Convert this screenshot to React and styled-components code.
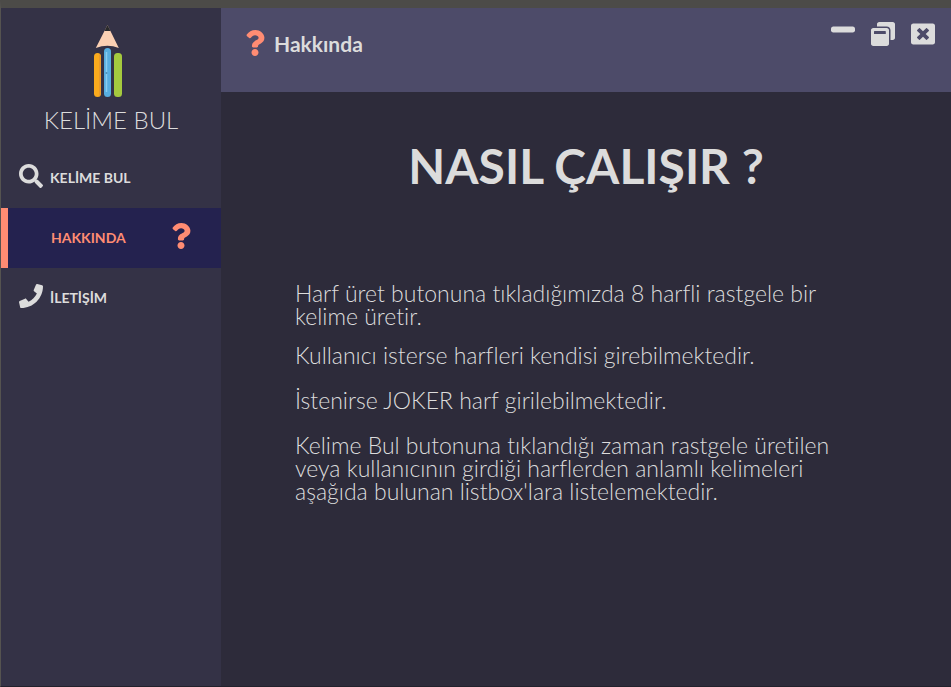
import React from "react";
import styled, { createGlobalStyle } from "styled-components";
import {
  FaPhone,
  FaQuestion,
  FaSearch,
  FaWindowClose,
  FaWindowMinimize,
  FaWindowRestore,
} from "react-icons/fa";

const GlobalStyle = createGlobalStyle`
  * { box-sizing: border-box; }
  body {
    margin: 0;
    background: #2d2b3a;
    color: #dcdcdc;
    font-family: "Century Gothic", Lato, sans-serif;
    font-variant-ligatures: none;
  }
`;

const Window = styled.div`
  display: grid;
  grid-template-columns: 220px 1fr;
  min-height: 100vh;
  border-top: 8px solid #4c4b48;
  border-left: 1px solid #555350;
  border-bottom: 1px solid #22212c;
`;

const Sidebar = styled.aside`
  background: #343246;
`;

const Brand = styled.div`
  display: flex;
  flex-direction: column;
  align-items: center;
  height: 140px;
  padding-top: 17px;

  svg {
    margin-right: 7px;
  }
`;

const BrandName = styled.span`
  margin-top: 8px;
  font-size: 24px;
  font-weight: 300;
  line-height: 28px;
  white-space: nowrap;
`;

const NavButton = styled.button`
  display: flex;
  align-items: center;
  gap: 7px;
  width: 100%;
  height: 60px;
  padding: 0 27px 0 18px;
  border: 0;
  background: transparent;
  color: inherit;
  font: 700 14px/20px "Century Gothic", Lato, sans-serif;
  cursor: pointer;

  svg {
    flex: none;
    width: 24px;
    height: 24px;
    margin-bottom: 4px;
  }
`;

const ActiveNavButton = styled(NavButton)`
  justify-content: space-between;
  padding-left: 43px;
  border-left: 7px solid #ff8c73;
  background: #24224f;
  color: #ff8c73;

  svg {
    width: 26px;
    height: 26px;
  }
`;

const Main = styled.main`
  min-width: 0;
`;

const TitleBar = styled.header`
  display: flex;
  justify-content: space-between;
  align-items: flex-start;
  height: 84px;
  padding: 0 16px 0 21px;
  background: #4d4b69;
`;

const PageName = styled.div`
  display: flex;
  align-items: center;
  gap: 6px;
  height: 70px;
  font-size: 21px;
  font-weight: 700;

  svg {
    width: 26px;
    height: 26px;
    color: #ff8c73;
  }
`;

const WindowControls = styled.div`
  display: flex;
  align-items: flex-end;
  gap: 16px;
  padding-top: 2px;
`;

const ControlButton = styled.button`
  display: flex;
  padding: ${(p) => (p.$raised ? "0 0 12px" : "0")};
  border: 0;
  background: transparent;
  color: inherit;
  cursor: pointer;

  svg {
    width: 24px;
    height: 24px;
  }
`;

const Heading = styled.h1`
  margin: 44px 0 0;
  font-size: 48px;
  font-weight: 700;
  line-height: 60px;
  text-align: center;
`;

const Guide = styled.section`
  max-width: 624px;
  padding: 86px 0 0 74px;
  font-size: 23px;
  font-weight: 300;
  line-height: 23px;
`;

const Step = styled.p`
  margin: 0 0 22px;

  &:first-child {
    margin-bottom: 16px;
  }
`;

function PencilLogo() {
  return (
    <svg width="30" height="73" viewBox="0 0 30 73" aria-hidden="true">
      <path d="M14.5 0 L2.8 23 Q14.5 18.5 25.8 23 Z" fill="#fbd0b3" />
      <path d="M14.5 0 L11.4 6 H17.6 Z" fill="#292a2c" />
      <rect x="1" y="28" width="7" height="44" rx="3.5" fill="#fbab1d" />
      <path d="M6 29 Q8 30 8 33 V67 Q8 70 6 71 Z" fill="#e99a2b" />
      <rect x="11" y="23" width="7" height="49" rx="3.5" fill="#57aee0" />
      <path d="M13.5 27 V67" stroke="#8acbef" strokeWidth="1.5" />
      <circle cx="13.5" cy="48" r="1" fill="#4c8fb7" />
      <rect x="21" y="28" width="8" height="44" rx="3.5" fill="#a5ca3e" />
    </svg>
  );
}

export default function App() {
  return (
    <>
      <GlobalStyle />
      <Window lang="tr">
        <Sidebar>
          <Brand>
            <PencilLogo />
            <BrandName>KELİME BUL</BrandName>
          </Brand>
          <nav>
            <NavButton type="button">
              <FaSearch />
              KELİME BUL
            </NavButton>
            <ActiveNavButton type="button" aria-current="page">
              HAKKINDA
              <FaQuestion />
            </ActiveNavButton>
            <NavButton type="button">
              <FaPhone />
              İLETİŞİM
            </NavButton>
          </nav>
        </Sidebar>
        <Main>
          <TitleBar>
            <PageName>
              <FaQuestion />
              Hakkında
            </PageName>
            <WindowControls>
              <ControlButton type="button" aria-label="Simge durumuna küçült" $raised>
                <FaWindowMinimize />
              </ControlButton>
              <ControlButton type="button" aria-label="Önceki boyut">
                <FaWindowRestore />
              </ControlButton>
              <ControlButton type="button" aria-label="Kapat">
                <FaWindowClose />
              </ControlButton>
            </WindowControls>
          </TitleBar>
          <Heading>NASIL ÇALIŞIR ?</Heading>
          <Guide>
            <Step>Harf üret butonuna tıkladığımızda 8 harfli rastgele bir kelime üretir.</Step>
            <Step>Kullanıcı isterse harfleri kendisi girebilmektedir.</Step>
            <Step>İstenirse JOKER harf girilebilmektedir.</Step>
            <Step>
              Kelime Bul butonuna tıklandığı zaman rastgele üretilen veya kullanıcının girdiği
              harflerden anlamlı kelimeleri aşağıda bulunan listbox'lara listelemektedir.
            </Step>
          </Guide>
        </Main>
      </Window>
    </>
  );
}
